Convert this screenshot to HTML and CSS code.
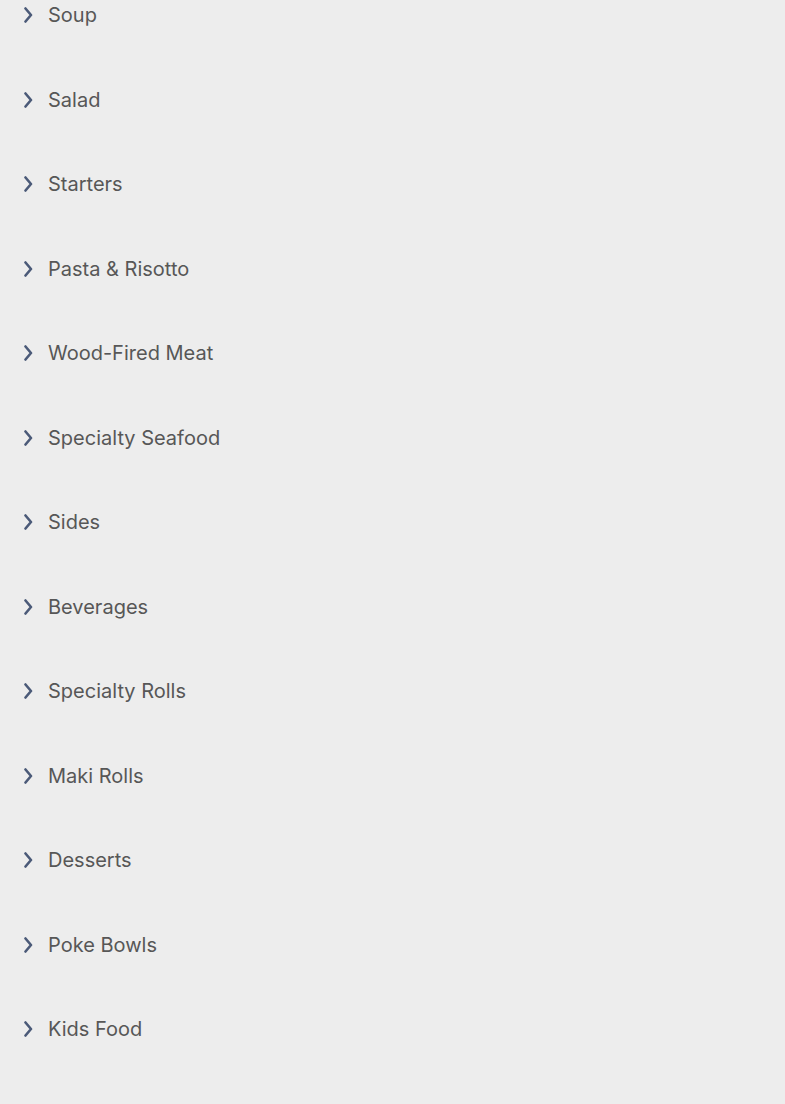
FILE: index.html
```html
<!DOCTYPE html>
<html>
<head>
<meta charset="utf-8">
<link rel="stylesheet" href="styles.css">
</head>
<body>
<ul class="menu">
  <li class="item"><svg class="chev" viewBox="0 0 10 16"><path d="M2.5 1.5 L8 8 L2.5 14.5"/></svg><span class="label">Soup</span></li>
  <li class="item"><svg class="chev" viewBox="0 0 10 16"><path d="M2.5 1.5 L8 8 L2.5 14.5"/></svg><span class="label">Salad</span></li>
  <li class="item"><svg class="chev" viewBox="0 0 10 16"><path d="M2.5 1.5 L8 8 L2.5 14.5"/></svg><span class="label">Starters</span></li>
  <li class="item"><svg class="chev" viewBox="0 0 10 16"><path d="M2.5 1.5 L8 8 L2.5 14.5"/></svg><span class="label">Pasta &amp; Risotto</span></li>
  <li class="item"><svg class="chev" viewBox="0 0 10 16"><path d="M2.5 1.5 L8 8 L2.5 14.5"/></svg><span class="label">Wood-Fired Meat</span></li>
  <li class="item"><svg class="chev" viewBox="0 0 10 16"><path d="M2.5 1.5 L8 8 L2.5 14.5"/></svg><span class="label">Specialty Seafood</span></li>
  <li class="item"><svg class="chev" viewBox="0 0 10 16"><path d="M2.5 1.5 L8 8 L2.5 14.5"/></svg><span class="label">Sides</span></li>
  <li class="item"><svg class="chev" viewBox="0 0 10 16"><path d="M2.5 1.5 L8 8 L2.5 14.5"/></svg><span class="label">Beverages</span></li>
  <li class="item"><svg class="chev" viewBox="0 0 10 16"><path d="M2.5 1.5 L8 8 L2.5 14.5"/></svg><span class="label">Specialty Rolls</span></li>
  <li class="item"><svg class="chev" viewBox="0 0 10 16"><path d="M2.5 1.5 L8 8 L2.5 14.5"/></svg><span class="label">Maki Rolls</span></li>
  <li class="item"><svg class="chev" viewBox="0 0 10 16"><path d="M2.5 1.5 L8 8 L2.5 14.5"/></svg><span class="label">Desserts</span></li>
  <li class="item"><svg class="chev" viewBox="0 0 10 16"><path d="M2.5 1.5 L8 8 L2.5 14.5"/></svg><span class="label">Poke Bowls</span></li>
  <li class="item"><svg class="chev" viewBox="0 0 10 16"><path d="M2.5 1.5 L8 8 L2.5 14.5"/></svg><span class="label">Kids Food</span></li>
</ul>
</body>
</html>
```
FILE: styles.css
```css
html, body {
  margin: 0;
  padding: 0;
  background: #ededed;
}
body {
  font-family: Inter, "Open Sans", "Liberation Sans", sans-serif;
}
.menu {
  list-style: none;
  margin: 0;
  padding: 3px 0 0 23px;
  display: flex;
  flex-direction: column;
  gap: 60.5px;
}
.item {
  display: flex;
  align-items: center;
  height: 24px;
}
.chev {
  width: 10px;
  height: 16px;
  fill: none;
  stroke: #4b5a78;
  stroke-width: 2.6;
  stroke-linecap: round;
  stroke-linejoin: round;
  margin-right: 15px;
}
.label {
  font-size: 20px;
  line-height: 24px;
  color: #575757;
}
```
